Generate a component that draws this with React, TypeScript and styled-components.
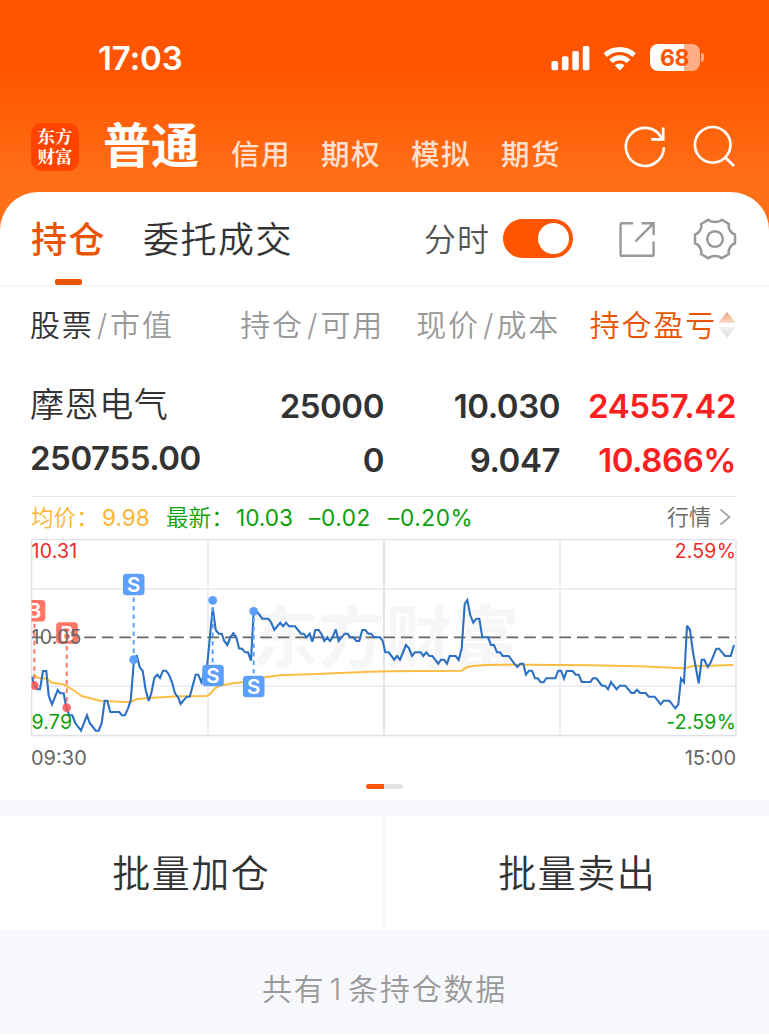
import React from "react";
import styled, { createGlobalStyle } from "styled-components";

const Global = createGlobalStyle`
  * { box-sizing: border-box; }
  body { margin: 0; background: #fff; font-family: Inter, "Noto Sans CJK SC", sans-serif; color: #333; }
`;

const Page = styled.div`
  width: 769px;
  height: 1035px;
  overflow: hidden;
  display: flex;
  flex-direction: column;
  background: linear-gradient(180deg, #ff5500 0, #ff5500 72px, #ff6f16 180px, #ff6f16 100%);
  white-space: nowrap;
`;

const StatusBar = styled.header`
  height: 115px;
  padding: 0 65px 0 98px;
  display: flex;
  justify-content: space-between;
  align-items: center;
  color: #fff;
`;
const Clock = styled.time`
  font-size: 33px;
  font-weight: 600;
  line-height: 40px;
  letter-spacing: -0.1px;
`;
const StatusIcons = styled.div`
  display: flex;
  align-items: center;
  gap: 13px;
`;
const Battery = styled.div`
  display: flex;
  align-items: center;
  gap: 1px;
`;
const BatteryBody = styled.div`
  width: 50px;
  height: 27px;
  border-radius: 8px;
  background: linear-gradient(90deg, #fff 0 68%, #ffad85 68% 100%);
  color: #ff5500;
  font-size: 23px;
  font-weight: 700;
  line-height: 28px;
  letter-spacing: -0.5px;
  text-align: center;
  padding-right: 1px;
`;
const BatteryCap = styled.div`
  width: 3px;
  height: 9px;
  border-radius: 0 4px 4px 0;
  background: #ffad85;
`;

const NavBar = styled.nav`
  height: 77px;
  padding: 0 34px 0 31px;
  display: flex;
  color: #fff;
`;
const Logo = styled.div`
  width: 48px;
  height: 48px;
  margin-top: 8px;
  padding-top: 3px;
  border-radius: 11px;
  background: #ff4400;
  font: 700 17.5px/20px "Noto Serif CJK SC", "Noto Sans CJK SC", sans-serif;
  text-align: center;
`;
const ActiveMarket = styled.h1`
  margin: 0 0 0 24px;
  font-size: 48px;
  font-weight: 600;
  line-height: 62px;
`;
const MarketTabs = styled.div`
  display: flex;
  gap: 30px;
  margin-left: 32px;
`;
const MarketTab = styled.span`
  font-size: 28.5px;
  line-height: 80px;
  letter-spacing: 1.5px;
  font-weight: 500;
  opacity: 0.8;
`;
const NavActions = styled.div`
  display: flex;
  margin-left: auto;
  gap: 27px;
  padding-top: 10px;
`;

const Sheet = styled.main`
  flex: 1;
  border-radius: 38px 38px 0 0;
  background: #fff;
  overflow: hidden;
`;
const TabRow = styled.div`
  height: 94px;
  padding: 0 32px 0 31px;
  display: flex;
  border-bottom: 1px solid #f1f1f2;
`;
const Tab = styled.div<{ $active?: boolean }>`
  display: flex;
  flex-direction: column;
  align-items: center;
  font-size: 36px;
  line-height: 96px;
  height: 93px;
  letter-spacing: 1.5px;
  margin-right: 37px;
  font-weight: ${(p) => (p.$active ? 500 : 350)};
  color: ${(p) => (p.$active ? "#ea5504" : "#333")};
`;
const Underline = styled.i`
  flex: none;
  width: 27px;
  height: 6px;
  margin-top: -9px;
  border-radius: 2px;
  background: #ea5504;
`;
const Tools = styled.div`
  display: flex;
  align-items: center;
  margin-left: auto;
`;
const SwitchLabel = styled.span`
  font-size: 32px;
  line-height: 93px;
  padding-top: 2px;
  font-weight: 350;
  letter-spacing: 1px;
  color: #555;
`;
const Switch = styled.div`
  width: 70px;
  height: 39px;
  margin-left: 13px;
  padding: 4px;
  border-radius: 20px;
  background: #ff5500;
  display: flex;
  justify-content: flex-end;
`;
const Knob = styled.div`
  width: 31px;
  height: 31px;
  border-radius: 50%;
  background: #fff;
`;

const COLUMNS = "170px 184px 176px 176px";
const HeadRow = styled.div`
  display: grid;
  grid-template-columns: ${COLUMNS};
  margin: 0 33px 0 30px;
  height: 79px;
  line-height: 79px;
  font-size: 30px;
  font-weight: 350;
  letter-spacing: 1.8px;
  color: #999;
`;
const HeadCell = styled.div<{ $right?: boolean }>`
  display: flex;
  justify-content: ${(p) => (p.$right ? "flex-end" : "flex-start")};
`;
const Slash = styled.span`
  width: 16.5px;
  text-align: center;
  letter-spacing: 0;
`;
const Strong = styled.span`
  color: #333;
`;
const SortLabel = styled.span`
  color: #ea5504;
`;
const Position = styled.section`
  display: grid;
  grid-template-columns: ${COLUMNS};
  grid-template-rows: 54px 54px;
  margin: 14px 32px 0 30px;
  height: 117px;
`;
const Name = styled.div`
  font-size: 34px;
  font-weight: 350;
  line-height: 51px;
  letter-spacing: 0.6px;
`;
const Num = styled.div<{ $up?: boolean; $left?: boolean }>`
  font-size: 33px;
  font-weight: 600;
  line-height: ${(p) => (p.$left ? 51 : 55)}px;
  letter-spacing: -0.45px;
  text-align: ${(p) => (p.$left ? "left" : "right")};
  color: ${(p) => (p.$up ? "#fa2020" : "#333")};
`;

const Quote = styled.section`
  margin: 0 32px 0 31px;
`;
const QuoteRow = styled.div`
  display: grid;
  grid-template-columns: 71px 64px 70px 73px 79px 1fr auto auto;
  height: 43px;
  border-top: 1px solid #e6e6e8;
  line-height: 41px;
  font-size: 22.6px;
`;
const Label = styled.span<{ $c: string }>`
  font-weight: 350;
  color: ${(p) => p.$c};
`;
const Val = styled.span<{ $c: string; $loose?: boolean }>`
  letter-spacing: ${(p) => (p.$loose ? 0.6 : 0)}px;
  color: ${(p) => p.$c};
`;
const More = styled.span`
  font-size: 22px;
  font-weight: 350;
  color: #666;
  margin-right: 8px;
`;
const Chevron = styled.svg`
  margin-top: 11px;
`;
const ChartSvg = styled.svg`
  display: block;
`;
const Hours = styled.div`
  display: flex;
  justify-content: space-between;
  height: 42px;
  padding-right: 1px;
  line-height: 43px;
  font-size: 20px;
  color: #666;
`;
const Pager = styled.div`
  width: 37px;
  height: 5px;
  margin: 5px auto 11px 335px;
  border-radius: 3px;
  background: linear-gradient(90deg, #ff5500 0 18px, #e4e4e4 18px);
`;
const Bottom = styled.footer`
  height: 234px;
  padding-top: 16px;
  background: #f6f8fb;
`;
const Actions = styled.div`
  display: grid;
  grid-template-columns: 382.5px 383.5px;
  gap: 3px;
  height: 114px;
`;
const Action = styled.button`
  border: 0;
  padding: 0;
  background: #fff;
  color: #333;
  font: 350 38px/114px Inter, "Noto Sans CJK SC", sans-serif;
  letter-spacing: 1.5px;
`;
const Summary = styled.p`
  margin: 0;
  text-align: center;
  line-height: 118px;
  font-size: 30px;
  font-weight: 350;
  letter-spacing: 1.8px;
  color: #999;
`;
const Count = styled.span`
  padding: 0 5px 0 4px;
`;

const PRICE =
  "31.7,676.7 34.7,685.7 37.3,689.3 40,689.3 43,671 46.3,671 48.7,695.7 52,704.3 57.7,690 60.3,693.3 63.7,693.3 66.3,707.7 69.3,715.3 72.3,715.3 75.3,723 81,730.7 87,715.3 89.7,723 95.7,730.7 98.7,730.7 101.7,723 104.7,700.7 107.3,700.7 110.3,712 119.3,712 122,715.3 125,715.3 128,708.3 130.7,700.7 133.7,663.3 136.7,655 139.7,667.3 142.7,671 145.7,690 148.7,701 151.3,693.3 154.3,678 157.3,674.7 160,678 163,670.7 166,670.7 169,674.7 172,682.3 175,693.3 178,697 180.7,704 186.7,696.7 189.7,696.7 195.7,674.7 198.3,674.7 201.3,682.3 204.3,673.3 207,667.3 212.7,608 215.7,630 218.7,633.7 221.7,633.7 224.3,641 227.3,645 230.3,637.3 233.3,633.3 236.3,637.3 239,648.3 242,648.7 245,652.3 248,652.3 251,660.7 253.7,611.3 256.7,611.3 262.3,618.7 268.3,618.7 271.3,622.7 274.3,630 280.3,622.7 283,626.3 286,622.7 289,626.3 295,626.3 301,633.7 303.7,633.7 306.7,637.3 309.7,633.7 312.3,641.7 315.3,630 318.7,630 321.3,633.7 324.3,641 327.3,637.3 330,641 332.7,637.3 335.7,629.3 338.7,641 344.7,633.7 347.7,633.7 350.3,637.3 353.3,637.3 356.3,641 359.3,641 362.3,630 365.3,630 368.3,633.7 371,633.7 374,637.3 380,637.3 382.7,641 385.3,652.3 388.7,652.3 394.3,659.7 397,656 400,659.7 406,645 409,648.3 412,656 415,652.3 420.7,652.3 423.3,656 426.3,652.3 429.3,656 432.3,656 438.3,663.7 441,659.7 444,659.7 447,663.7 449.7,656 455.7,656 458.7,660 461.7,648.3 464.7,604 467.3,600 470.3,615.3 473.3,622.7 476.3,618.7 479.3,618.7 482.3,637.3 488,637.3 491,645 494,645 497,652.3 500,652.3 502.7,656 508.7,656 514.3,663.7 517.3,667 520.3,663.7 523.3,663.7 526,674.7 529,670.7 532,670.7 535,678.3 537.7,678.3 540.7,682.3 543.7,682.3 546.3,678.3 555.3,678.3 558.3,670.7 561,670.7 564,678.7 566.7,671 572.7,671 575.7,674.7 578.7,674.7 581.7,682 590.3,682 593,678.3 596.3,678.3 602,685.7 605,685.7 608,689.3 611,682 616.7,689.3 619.7,685.7 625.3,685.7 631.3,693 634,693 637,689.7 640,693 645.7,693 648.7,696.7 654.7,696.7 660.7,704.3 663.7,700.7 669.3,700.7 675.3,708.3 678.3,704.3 681,678.7 684,682.3 687,625.7 690,630 693,652.3 698.7,683.3 701.7,659.7 704.3,659.7 707.7,667 710.3,663.3 716.3,648.7 719,648.7 725,656 730.7,656 734,645";

const AVERAGE =
  "33.3,674 37.3,677.7 47,678.7 51.7,682.7 63.3,684.3 73.3,690 81.7,696 100,700.7 130,702.3 136.7,699.3 148.3,698 166.7,697 178,696.3 206.7,696 210,694 215,688.3 220,685.7 233,683.3 253.3,681 261.7,677.7 280,675.3 323,673.7 370,671.7 390,671.3 461.7,670.7 466.7,667.3 473.3,666 485,665 526.7,664.7 560,665 588,665.3 640,666.3 683.3,668.3 688.3,667.3 692.3,666 701.7,666 733.3,665";

const TRADES = [
  { side: "B", x: 34.5, y: 610.7, px: 34.3, py: 685.5 },
  { side: "B", x: 67, y: 633, px: 66.7, py: 707.7 },
  { side: "S", x: 133.7, y: 584.5, px: 133.7, py: 659.7 },
  { side: "S", x: 213, y: 675.5, px: 212.7, py: 600.3 },
  { side: "S", x: 253.7, y: 686.5, px: 253.7, py: 611.3 },
];

function Chart() {
  return (
    <ChartSvg width="706" height="198" viewBox="31 539 706 198" fontFamily='Inter, "Noto Sans CJK SC", sans-serif' fontSize="19.5" letterSpacing="0.2">
      <defs>
        <clipPath id="plot"><rect x="31.5" y="539" width="705" height="197" /></clipPath>
      </defs>
      <text x="385.5" y="662" fontSize="67" fontWeight="700" textAnchor="middle" fill="#f6f6f7">东方财富</text>
      <g fill="none" stroke="#e9eaf2" strokeWidth="1.6">
        <path d="M32 589H736M32 686H736M208 541V735M560 541V735" />
        <path d="M384 541V735" stroke="#e0e3ec" strokeWidth="2" />
        <path d="M31.6 539.5V735.5H736V539.5Z" stroke="#dfe1e8" strokeWidth="1.3" />
      </g>
      <path d="M32 637.4H736" stroke="#666" strokeWidth="1.8" strokeDasharray="11.6 6" strokeDashoffset="0.6" />
      <g clipPath="url(#plot)">
        <polyline points={AVERAGE} fill="none" stroke="#fdbd43" strokeWidth="2" />
        <polyline points={PRICE} fill="none" stroke="#2b70c2" strokeWidth="2.1" strokeLinejoin="miter" strokeMiterlimit="3" />
        {TRADES.map((t) => {
          const c = t.side === "B" ? "#ff7566" : "#5c9fff";
          return (
            <g key={t.px}>
              <path d={`M${t.px} ${t.y + (t.py > t.y ? 13 : -13)}V${t.py}`} stroke={c} strokeWidth="2" strokeDasharray="4.5 4" />
              <circle cx={t.px} cy={t.py} r="4.4" fill={t.side === "B" ? "#f45555" : c} fillOpacity={t.side === "B" ? 0.85 : 1} />
              <rect x={t.x - 10.8} y={t.y - 10.8} width="21.6" height="21.6" rx="3.5" fill={c} />
              <text x={t.x} y={t.y + 7.5} fontSize="20.5" fontWeight="600" letterSpacing="0" textAnchor="middle" fill="#fff">{t.side}</text>
            </g>
          );
        })}
      </g>
      <text x="31.5" y="558" fill="#f52828">10.31</text>
      <text x="31.5" y="644" fill="#666">10.05</text>
      <text x="31.5" y="729" fill="#0aa00a">9.79</text>
      <text x="736" y="558" fill="#f52828" textAnchor="end">2.59%</text>
      <text x="736" y="729" fill="#0aa00a" textAnchor="end">-2.59%</text>
    </ChartSvg>
  );
}

const ToolIcon = styled.svg<{ $gap: number }>`
  margin-left: ${(p) => p.$gap}px;
`;

const ShareIcon = () => (
  <ToolIcon $gap={45} width="38" height="38" viewBox="618 219 38 38" fill="none" stroke="#999" strokeWidth="2.4">
    <path d="M633 222.2H622Q620.6 222.2 620.6 223.6V253.4Q620.6 254.8 622 254.8H652.2Q653.6 254.8 653.6 253.4V240.5M641.5 222.2H653.6V234M653 222.8L635.5 240.3" />
  </ToolIcon>
);

const GearIcon = () => (
  <ToolIcon $gap={37} width="44" height="44" viewBox="693 216.5 44 44" fill="none" stroke="#999" strokeWidth="2.5" strokeLinejoin="round">
    <path d="M708.5 219.2C711 222.3 719 222.3 721.5 219.2L729 223.5C727.6 227.5 731 233.3 735 234V243C731 243.7 727.6 249.5 729 253.5L721.5 257.8C719 254.7 711 254.7 708.5 257.8L701 253.5C702.4 249.5 699 243.7 695 243V234C699 233.3 702.4 227.5 701 223.5Z" />
    <circle cx="715" cy="238.5" r="7.8" />
  </ToolIcon>
);

export default function App() {
  return (
    <>
      <Global />
      <Page>
        <StatusBar>
          <Clock>17:03</Clock>
          <StatusIcons>
            <svg width="39" height="26" viewBox="550.5 44 39 26" fill="#fff">
              <rect x="551" y="60" width="6.6" height="9.3" rx="1.8" />
              <rect x="561.4" y="55.2" width="6.6" height="14.1" rx="1.8" />
              <rect x="571.8" y="50" width="6.6" height="19.3" rx="1.8" />
              <rect x="582.3" y="45" width="6.6" height="24.3" rx="1.8" />
            </svg>
            <svg width="34" height="26" viewBox="603 44 34 26" fill="none" stroke="#fff" strokeWidth="5">
              <path d="M605.3 54.2A21.2 21.2 0 0 1 634.2 54.2" />
              <path d="M611 60.3A12.6 12.6 0 0 1 628.5 60.3" />
              <path d="M614.9 64.5A7 7 0 0 1 624.6 64.5L619.75 69.4Z" fill="#fff" stroke="none" />
            </svg>
            <Battery>
              <BatteryBody>68</BatteryBody>
              <BatteryCap />
            </Battery>
          </StatusIcons>
        </StatusBar>
        <NavBar>
          <Logo>东方<br />财富</Logo>
          <ActiveMarket>普通</ActiveMarket>
          <MarketTabs>
            {["信用", "期权", "模拟", "期货"].map((t) => <MarketTab key={t}>{t}</MarketTab>)}
          </MarketTabs>
          <NavActions>
            <svg width="42" height="44" viewBox="624 125 42 44" fill="none" stroke="#fff" strokeWidth="2.7">
              <path d="M663.9 147.2A19 19 0 1 1 661 136.8L663 139.5" />
              <path d="M663.2 127.5V139.4H651.2" />
            </svg>
            <svg width="42" height="44" viewBox="693 125 42 44" fill="none" stroke="#fff" strokeWidth="2.7">
              <circle cx="712.7" cy="144.8" r="17.8" />
              <path d="M725.1 157.2L734 166" />
            </svg>
          </NavActions>
        </NavBar>
        <Sheet>
          <TabRow>
            <Tab $active>持仓<Underline /></Tab>
            <Tab>委托成交</Tab>
            <Tools>
              <SwitchLabel>分时</SwitchLabel>
              <Switch><Knob /></Switch>
              <ShareIcon />
              <GearIcon />
            </Tools>
          </TabRow>
          <HeadRow>
            <HeadCell><Strong>股票</Strong><Slash>/</Slash>市值</HeadCell>
            <HeadCell $right>持仓<Slash>/</Slash>可用</HeadCell>
            <HeadCell $right>现价<Slash>/</Slash>成本</HeadCell>
            <HeadCell $right>
              <SortLabel>持仓盈亏</SortLabel>
              <svg width="19" height="79" viewBox="717 286 19 79">
                <defs>
                  <linearGradient id="up" x2="0" y2="1"><stop stopColor="#ee9a70" /><stop offset="1" stopColor="#fbe0d2" /></linearGradient>
                  <linearGradient id="down" x2="0" y2="1"><stop stopColor="#f3f3f3" /><stop offset="1" stopColor="#dcdcdc" /></linearGradient>
                </defs>
                <path d="M727 312L736 323H718Z" fill="url(#up)" />
                <path d="M718 327H736L727 337.5Z" fill="url(#down)" />
              </svg>
            </HeadCell>
          </HeadRow>
          <Position>
            <Name>摩恩电气</Name>
            <Num>25000</Num>
            <Num>10.030</Num>
            <Num $up>24557.42</Num>
            <Num $left>250755.00</Num>
            <Num>0</Num>
            <Num>9.047</Num>
            <Num $up>10.866%</Num>
          </Position>
          <Quote>
            <QuoteRow>
              <Label $c="#fdb32f">均价：</Label>
              <Val $c="#fdb32f">9.98</Val>
              <Label $c="#0aa00a">最新：</Label>
              <Val $c="#0aa00a">10.03</Val>
              <Val $c="#0aa00a" $loose>–0.02</Val>
              <Val $c="#0aa00a" $loose>–0.20%</Val>
              <More>行情</More>
              <Chevron width="18" height="18" viewBox="719 508.5 18 18" fill="none" stroke="#aaa" strokeWidth="2">
                <path d="M720.5 510L729.5 517.5L720.5 525" />
              </Chevron>
            </QuoteRow>
            <Chart />
            <Hours><span>09:30</span><span>15:00</span></Hours>
            <Pager />
          </Quote>
          <Bottom>
            <Actions>
              <Action>批量加仓</Action>
              <Action>批量卖出</Action>
            </Actions>
            <Summary>共有<Count>1</Count>条持仓数据</Summary>
          </Bottom>
        </Sheet>
      </Page>
    </>
  );
}
